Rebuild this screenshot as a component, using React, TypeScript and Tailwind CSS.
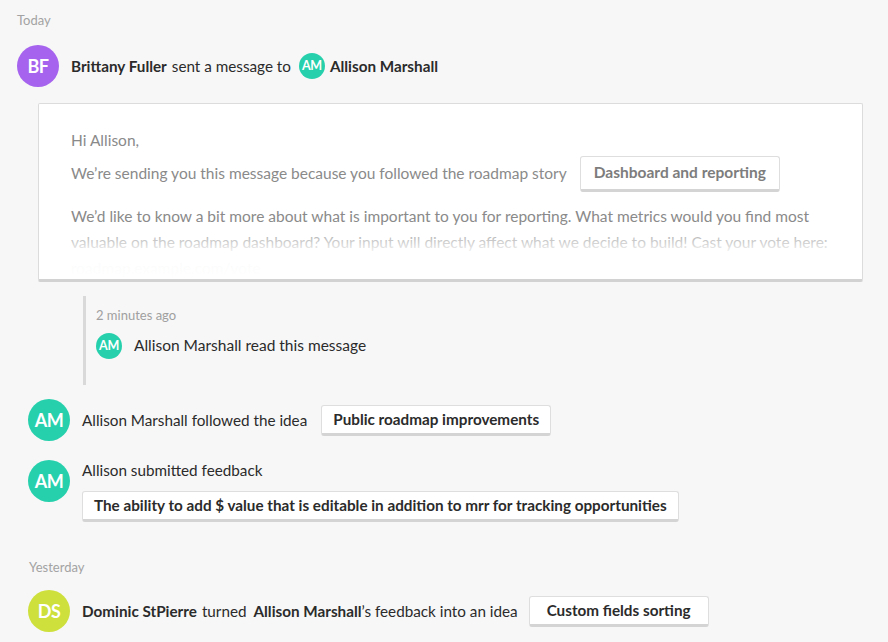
import type { ReactNode } from 'react';

type AvatarProps = {
  initials: string;
  color: string;
  size: 'lg' | 'sm';
};

function Avatar({ initials, color, size }: AvatarProps) {
  const dims =
    size === 'lg'
      ? 'w-[42px] h-[42px] text-[18px]'
      : 'w-[26px] h-[26px] text-[12.5px]';
  return (
    <div
      className={`${dims} ${color} shrink-0 rounded-full flex items-center justify-center text-white font-bold tracking-tight`}
    >
      {initials}
    </div>
  );
}

function Chip({ children, muted = false, wide = false }: { children: ReactNode; muted?: boolean; wide?: boolean }) {
  return (
    <span
      className={`inline-flex items-center bg-white border border-[#dedede] border-b-[3px] border-b-[#d4d4d4] rounded-[3px] font-bold whitespace-nowrap ${
        muted
          ? 'h-[36px] px-[13px] text-[15.5px] text-[#7d7d7d]'
          : `h-[31px] ${wide ? 'px-[17px]' : 'px-[11px]'} text-[15.25px] text-[#2b2b2b]`
      }`}
    >
      {children}
    </span>
  );
}

export default function App() {
  return (
    <div className="w-[888px] h-[642px] overflow-hidden bg-[#f7f7f7] font-['Lato','Noto_Sans',sans-serif] text-[#2b2b2b]">
      {/* today */}
      <div className="pl-[17px] pt-[12px] text-[13px] leading-4 text-[#a3a3a3]">Today</div>

      <div className="flex items-center gap-3 pl-[17px] mt-[17px]">
        <Avatar initials="BF" color="bg-[#a563ee]" size="lg" />
        <div className="flex items-center text-[15.25px]">
          <span className="font-bold">Brittany Fuller</span>
          <span className="ml-[5px]">sent a message to</span>
          <span className="ml-[8px] mr-[5px]">
            <Avatar initials="AM" color="bg-[#27d0ac]" size="sm" />
          </span>
          <span className="font-bold">Allison Marshall</span>
        </div>
      </div>

      {/* message card */}
      <div className="relative ml-[38px] mt-[16px] w-[825px] h-[179px] overflow-hidden bg-white border border-[#dcdcdc] border-b-[3px] border-b-[#d2d2d2] rounded-[2px]">
        <div className="pl-[32px] pr-[30px] pt-[24px] text-[15.5px] text-[#8a8a8a]">
          <div className="leading-6">Hi Allison,</div>
          <div className="flex items-center gap-[13px] mt-[4px]">
            <span>We’re sending you this message because you followed the roadmap story</span>
            <Chip muted>Dashboard and reporting</Chip>
          </div>
          <p className="mt-[11px] leading-[26px]">
            We’d like to know a bit more about what is important to you for reporting. What metrics would you find most
            valuable on the roadmap dashboard? Your input will directly affect what we decide to build! Cast your vote here:
            roadmap.example.com/vote
          </p>
        </div>
        <div className="absolute inset-x-0 bottom-0 h-[56px] bg-gradient-to-b from-white/0 via-white/95 via-55% to-white" />
      </div>

      {/* read receipt */}
      <div className="ml-[83px] mt-[14px] h-[89px] border-l-[3px] border-[#d9d9d9] pl-[10px] pt-[11px]">
        <div className="text-[13px] leading-4 text-[#a0a0a0]">2 minutes ago</div>
        <div className="flex items-center gap-3 mt-[10px]">
          <Avatar initials="AM" color="bg-[#27d0ac]" size="sm" />
          <span className="text-[15.5px]">Allison Marshall read this message</span>
        </div>
      </div>

      {/* followed */}
      <div className="flex items-center gap-3 pl-[28px] mt-[14px]">
        <Avatar initials="AM" color="bg-[#27d0ac]" size="lg" />
        <span className="text-[15.25px] mr-[2px]">Allison Marshall followed the idea</span>
        <Chip>Public roadmap improvements</Chip>
      </div>

      {/* submitted feedback */}
      <div className="flex gap-3 pl-[28px] mt-[19px]">
        <Avatar initials="AM" color="bg-[#27d0ac]" size="lg" />
        <div className="flex flex-col items-start">
          <span className="text-[15.25px] leading-5">Allison submitted feedback</span>
          <div className="mt-[11px]">
            <Chip>The ability to add $ value that is editable in addition to mrr for tracking opportunities</Chip>
          </div>
        </div>
      </div>

      {/* yesterday */}
      <div className="pl-[29px] mt-[37px] text-[13px] leading-4 text-[#a3a3a3]">Yesterday</div>

      <div className="flex items-center gap-3 pl-[28px] mt-[15px]">
        <Avatar initials="DS" color="bg-[#cde03b]" size="lg" />
        <div className="flex items-center text-[15.25px]">
          <span className="font-bold">Dominic StPierre</span>
          <span className="ml-[5px]">turned</span>
          <span className="font-bold ml-[7px]">Allison Marshall</span>
          <span>’s feedback into an idea</span>
          <span className="ml-[11px]">
            <Chip wide>Custom fields sorting</Chip>
          </span>
        </div>
      </div>
    </div>
  );
}
